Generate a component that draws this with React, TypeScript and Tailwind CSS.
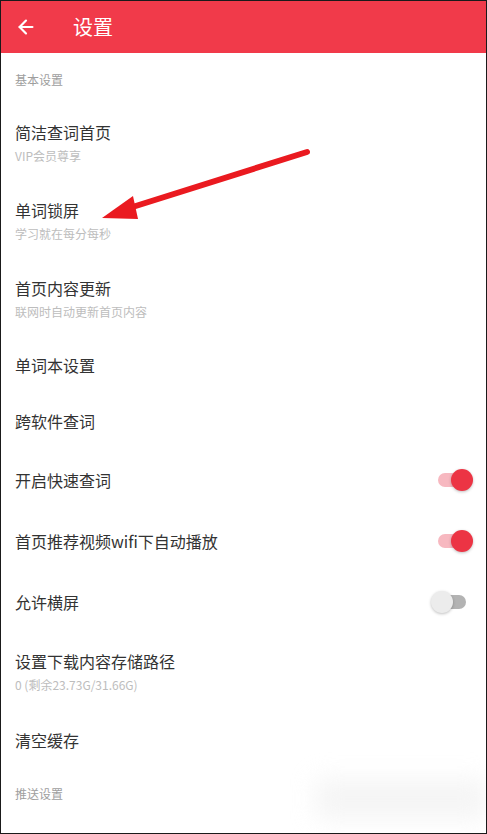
import { ArrowLeft } from "lucide-react";

type Row = {
  title: string;
  sub?: string;
  toggle?: "on" | "off";
  h: string;
};

const basic: Row[] = [
  { title: "简洁查词首页", sub: "VIP会员尊享", h: "h-[78px]" },
  { title: "单词锁屏", sub: "学习就在每分每秒", h: "h-[78px]" },
  { title: "首页内容更新", sub: "联网时自动更新首页内容", h: "h-[78px]" },
  { title: "单词本设置", h: "h-[56px]" },
  { title: "跨软件查词", h: "h-[56px]" },
  { title: "开启快速查词", toggle: "on", h: "h-[61px]" },
  { title: "首页推荐视频wifi下自动播放", toggle: "on", h: "h-[61px]" },
  { title: "允许横屏", toggle: "off", h: "h-[61px]" },
  { title: "设置下载内容存储路径", sub: "0 (剩余23.73G/31.66G)", h: "h-[78px]" },
  { title: "清空缓存", h: "h-[59px]" },
];

function Toggle({ on }: { on: boolean }) {
  return (
    <div className="relative w-[42px] h-[22px] flex items-center">
      <div
        className={`ml-[7px] w-[28px] h-[14px] rounded-full ${
          on ? "bg-[#f7b8c0]" : "bg-[#b3b3b3]"
        }`}
      />
      <div
        className={`absolute top-0 w-[22px] h-[22px] rounded-full shadow-[0_1px_3px_rgba(0,0,0,0.25)] ${
          on ? "right-0 bg-[#ec3444]" : "left-0 bg-[#ececec]"
        }`}
      />
    </div>
  );
}

function SettingRow({ row }: { row: Row }) {
  return (
    <div className={`${row.h} flex items-center justify-between pl-[14px] pr-[13px]`}>
      <div className="flex flex-col">
        <span className="text-[16px] leading-[22px] text-[#333333]">{row.title}</span>
        {row.sub && (
          <span className="mt-[5px] text-[12px] leading-[16px] text-[#bdbdbd]">{row.sub}</span>
        )}
      </div>
      {row.toggle && <Toggle on={row.toggle === "on"} />}
    </div>
  );
}

export default function App() {
  return (
    <div
      className="relative w-[487px] h-[834px] overflow-hidden bg-white border border-[#1a1a1a]"
      style={{ fontFamily: '"Noto Sans CJK SC", "Noto Sans", sans-serif' }}
    >
      <header className="h-[52px] bg-[#f13a4a] flex items-center">
        <ArrowLeft size={22} strokeWidth={2.4} className="ml-[14px] text-white" />
        <span className="ml-[36px] text-[20px] text-white">设置</span>
      </header>

      <div className="h-[50px] pl-[14px] pt-[19px] text-[12px] leading-[16px] text-[#9e9e9e]">
        基本设置
      </div>

      {basic.map((r) => (
        <SettingRow key={r.title} row={r} />
      ))}

      <div className="pl-[14px] pt-[17px] text-[12px] leading-[16px] text-[#9e9e9e]">
        推送设置
      </div>

      {/* blurred watermark area bottom right */}
      <div className="absolute right-0 bottom-[14px] w-[170px] h-[40px] bg-[#eeeeee] blur-md opacity-60" />

      {/* annotation arrow */}
      <svg className="absolute left-0 top-0 pointer-events-none" width="487" height="834">
        <line x1="306" y1="151" x2="122" y2="209" stroke="#ea1a20" strokeWidth="6" strokeLinecap="round" />
        <polygon points="101,217 132,195 137,218" fill="#ea1a20" />
      </svg>
    </div>
  );
}
